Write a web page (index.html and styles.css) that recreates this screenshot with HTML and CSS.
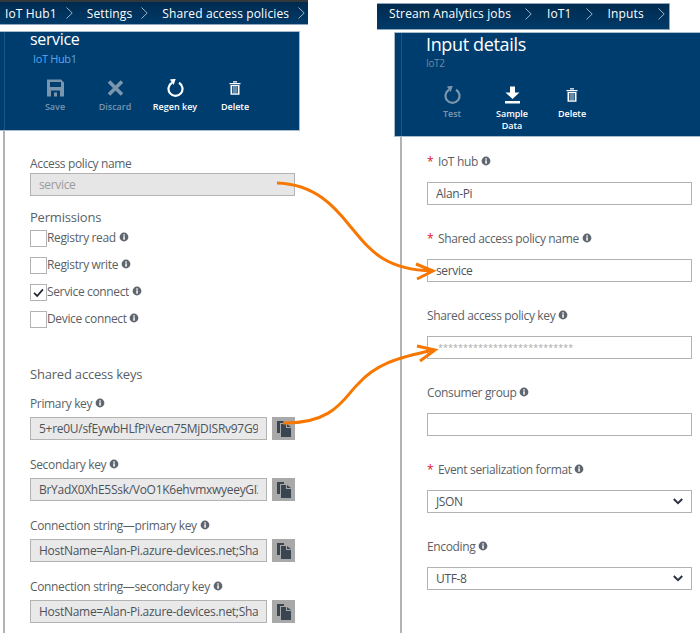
FILE: index.html
```html
<!DOCTYPE html>
<html lang="en">
<head>
  <meta charset="UTF-8">
  <meta name="viewport" content="width=device-width, initial-scale=1.0">
  <title>IoT Hub and Stream Analytics input</title>
  <link rel="stylesheet" href="styles.css">
</head>
<body>
  <svg class="defs" width="0" height="0">
    <symbol id="info" viewBox="0 0 10 10">
      <circle cx="5" cy="5" r="4.4" fill="#5f6670"/>
      <rect x="4.3" y="4.3" width="1.5" height="3.4" fill="#fff"/>
      <rect x="4.3" y="2.3" width="1.5" height="1.4" fill="#fff"/>
    </symbol>
    <symbol id="chev" viewBox="0 0 7 12">
      <path d="M0.5 0.5 L6.2 6 L0.5 11.5" fill="none" stroke="currentColor" stroke-width="1"/>
    </symbol>
    <symbol id="copy" viewBox="0 0 14 16">
      <path d="M0 0 H7 V2 H3 V12 H0 Z" fill="#3a4552"/>
      <path d="M4 3 H9 V7 H14 V16 H4 Z" fill="#3a4552"/>
      <path d="M10 3 L14 6 H10 Z" fill="#3a4552"/>
    </symbol>
    <symbol id="trash" viewBox="0 0 12 14">
      <path d="M0.5 2 H11.5 V3.2 H0.5 Z M4 0.3 H8 V1.6 H4 Z" fill="currentColor"/>
      <path d="M1.5 4 H10.5 V13.7 H1.5 Z M3.2 5 V12.6 H4.6 V5 Z M5.4 5 V12.6 H6.6 V5 Z M7.4 5 V12.6 H8.8 V5 Z" fill="currentColor" fill-rule="evenodd"/>
    </symbol>
    <symbol id="refresh" viewBox="0 0 17 18">
      <path d="M5 3.8 A7 7 0 1 0 12 3.8" fill="none" stroke="currentColor" stroke-width="2.2"/>
      <path d="M3.5 0 L9.5 0.3 L6 6 Z" fill="currentColor" transform="rotate(-12 6 3)"/>
    </symbol>
    <symbol id="drop" viewBox="0 0 10 7">
      <path d="M0.8 1 L5 5.2 L9.2 1" fill="none" stroke="#2b3440" stroke-width="2"/>
    </symbol>
  </svg>

  <section class="pane pane-left">
    <nav class="crumbs crumbs-left">
      <span>IoT Hub1</span><svg class="chev"><use href="#chev"/></svg>
      <span>Settings</span><svg class="chev"><use href="#chev"/></svg>
      <span>Shared access policies</span><svg class="chev"><use href="#chev"/></svg>
    </nav>
    <div class="blade blade-left">
      <header class="blade-head head-left">
        <h1>service</h1>
        <p class="sub sub-link">IoT Hub1</p>
        <div class="cmds">
          <div class="cmd off">
            <svg class="cmd-icon" viewBox="0 0 17 17"><path d="M0 0 H14 L17 3 V17 H0 Z M3 2.5 V7.5 H14 V2.5 Z M4 11 V17 H13 V11 Z M7 13 H10 V17 H7 Z" fill="currentColor" fill-rule="evenodd"/></svg>
            <span>Save</span>
          </div>
          <div class="cmd off">
            <svg class="cmd-icon" viewBox="0 0 17 17"><path d="M2 2 L15 15 M15 2 L2 15" stroke="currentColor" stroke-width="3.6"/></svg>
            <span>Discard</span>
          </div>
          <div class="cmd">
            <svg class="cmd-icon"><use href="#refresh"/></svg>
            <span>Regen key</span>
          </div>
          <div class="cmd">
            <svg class="cmd-icon trash"><use href="#trash"/></svg>
            <span>Delete</span>
          </div>
        </div>
      </header>

      <div class="blade-body body-left">
        <label class="lbl">Access policy name</label>
        <input class="box box-off" value="service" readonly>

        <h2 class="perm-title">Permissions</h2>
        <ul class="perms">
          <li><span class="check"></span>Registry read <svg class="i"><use href="#info"/></svg></li>
          <li><span class="check"></span>Registry write <svg class="i"><use href="#info"/></svg></li>
          <li><span class="check"><svg viewBox="0 0 17 17"><path d="M3.5 9 L7 12.5 L13.5 5" fill="none" stroke="#1f2730" stroke-width="2"/></svg></span>Service connect <svg class="i"><use href="#info"/></svg></li>
          <li><span class="check"></span>Device connect <svg class="i"><use href="#info"/></svg></li>
        </ul>

        <h2 class="keys-title">Shared access keys</h2>
        <div class="key">
          <label class="lbl">Primary key <svg class="i"><use href="#info"/></svg></label>
          <div class="key-row">
            <input class="box box-key" value="5+re0U/sfEywbHLfPiVecn75MjDISRv97G9MaRkGhT0=" readonly>
            <button class="copy"><svg><use href="#copy"/></svg></button>
          </div>
        </div>
        <div class="key">
          <label class="lbl">Secondary key <svg class="i"><use href="#info"/></svg></label>
          <div class="key-row">
            <input class="box box-key" value="BrYadX0XhE5Ssk/VoO1K6ehvmxwyeeyGIXpTq8wNcLs=" readonly>
            <button class="copy"><svg><use href="#copy"/></svg></button>
          </div>
        </div>
        <div class="key">
          <label class="lbl">Connection string—primary key <svg class="i"><use href="#info"/></svg></label>
          <div class="key-row">
            <input class="box box-key" value="HostName=Alan-Pi.azure-devices.net;SharedAccessKeyName=service" readonly>
            <button class="copy"><svg><use href="#copy"/></svg></button>
          </div>
        </div>
        <div class="key">
          <label class="lbl">Connection string—secondary key <svg class="i"><use href="#info"/></svg></label>
          <div class="key-row">
            <input class="box box-key" value="HostName=Alan-Pi.azure-devices.net;SharedAccessKeyName=service" readonly>
            <button class="copy"><svg><use href="#copy"/></svg></button>
          </div>
        </div>
      </div>
    </div>
  </section>

  <section class="pane pane-right">
    <nav class="crumbs crumbs-right">
      <span>Stream Analytics jobs</span><svg class="chev"><use href="#chev"/></svg>
      <span>IoT1</span><svg class="chev"><use href="#chev"/></svg>
      <span>Inputs</span><svg class="chev"><use href="#chev"/></svg>
    </nav>
    <div class="blade blade-right">
      <header class="blade-head head-right">
        <h1>Input details</h1>
        <p class="sub">IoT2</p>
        <div class="cmds">
          <div class="cmd off">
            <svg class="cmd-icon"><use href="#refresh"/></svg>
            <span>Test</span>
          </div>
          <div class="cmd">
            <svg class="cmd-icon" viewBox="0 0 17 17"><path d="M6 0 H11 V6 H15.5 L8.5 12.5 L1.5 6 H6 Z M1 14.5 H16 V17 H1 Z" fill="currentColor"/></svg>
            <span>Sample<br>Data</span>
          </div>
          <div class="cmd">
            <svg class="cmd-icon trash"><use href="#trash"/></svg>
            <span>Delete</span>
          </div>
        </div>
      </header>

      <div class="blade-body body-right">
        <div class="field">
          <label class="lbl"><b class="star">*</b>IoT hub <svg class="i"><use href="#info"/></svg></label>
          <input class="box" value="Alan-Pi" readonly>
        </div>
        <div class="field">
          <label class="lbl"><b class="star">*</b>Shared access policy name <svg class="i"><use href="#info"/></svg></label>
          <input class="box" value="service" readonly>
        </div>
        <div class="field">
          <label class="lbl">Shared access policy key <svg class="i"><use href="#info"/></svg></label>
          <input class="box secret" value="***************************" readonly>
        </div>
        <div class="field">
          <label class="lbl">Consumer group <svg class="i"><use href="#info"/></svg></label>
          <input class="box" readonly>
        </div>
        <div class="field">
          <label class="lbl"><b class="star">*</b>Event serialization format <svg class="i"><use href="#info"/></svg></label>
          <div class="box box-select">JSON<svg class="drop"><use href="#drop"/></svg></div>
        </div>
        <div class="field">
          <label class="lbl">Encoding <svg class="i"><use href="#info"/></svg></label>
          <div class="box box-select">UTF-8<svg class="drop"><use href="#drop"/></svg></div>
        </div>
      </div>
    </div>
  </section>

  <!-- hand drawn arrows on top of both blades -->
  <svg class="arrows" viewBox="0 0 700 633">
    <g fill="none" stroke="#f77700" stroke-width="3">
      <path d="M277 183 C315 184 335 207 350 226 C368 247 382 270 432 271"/>
      <path d="M416 264 L433 271 L417 279"/>
      <path d="M283 423 C335 424 345 396 358 384 C375 365 395 358 434 350"/>
      <path d="M417 346 L435 350 L420 361"/>
    </g>
  </svg>
</body>
</html>
```

FILE: styles.css
```css
* { box-sizing: border-box; }
html, body { margin: 0; height: 633px; overflow: hidden; }
body { position: relative; display: flex; background: #fff; font-family: "Open Sans", "Liberation Sans", sans-serif; font-size: 12px; letter-spacing: -.35px; color: #5a5f66; }
.defs { position: absolute; }
h1, h2, p, ul { margin: 0; padding: 0; font-weight: 400; }
ul { list-style: none; }

.pane-left { width: 377px; }
.pane-right { width: 323px; padding-top: 3px; }

/* breadcrumbs */
.crumbs { display: flex; align-items: center; color: #fff; white-space: nowrap; letter-spacing: .13px; background: linear-gradient(#002b50, #003a68); }
.crumbs-left { width: 308px; height: 25px; padding-left: 5px; border-top: 2px solid #33383d; border-bottom: 1px solid #8fa6bb; }
.crumbs-right { width: 293px; height: 27px; padding: 0 0 6px 12px; border-top: 1px solid #8fa6bb; border-bottom: 1px solid #8fa6bb; border-right: 1px solid #8fa6bb; }
.chev { width: 7px; height: 12px; margin: 0 14px 0 9px; color: #9db2c6; flex: none; }
.crumbs-right .chev { margin: 0 15px 0 14px; }

/* blades */
.blade { overflow: visible; }
.blade-left { margin: 6px 0 0 3px; width: 297px; height: 602px; border-left: 2px solid #b3b3b3; }
.blade-right { margin: 2px 0 0 23px; width: 300px; height: 601px; border-left: 2px solid #b3b3b3; }

.blade-head { position: relative; background: #003d6f; color: #fff; border-top: 1px solid #a9bccb; border-bottom: 1px solid #a9bccb; }
.head-left { height: 100px; margin-left: -5px; padding-left: 30px; border-right: 1px solid #a9bccb; background-image: linear-gradient(90deg, #003d6f 4px, #1d5585 4px, #1d5585 5px, #003d6f 5px); }
.head-right { height: 105px; margin-left: -8px; padding-left: 31px; border-left: 1px solid #a9bccb; background-image: linear-gradient(90deg, #003d6f 6px, #1d5585 6px, #1d5585 7px, #003d6f 7px); }
.head-left h1 { font-size: 16px; line-height: 14px; }
.head-right h1 { font-size: 18px; line-height: 22px; }
.sub { font-size: 10px; line-height: 14px; color: #6f8ba5; }
.head-left .sub { margin-top: 6px; padding-left: 3px; }
.head-right .sub { margin-top: 1px; }
.sub-link { color: #5aa5ee; font-size: 11px; }

/* command bar */
.cmds { display: flex; margin-left: -5px; }
.head-left .cmds { margin-top: 13px; }
.head-right .cmds { margin-top: 16px; margin-left: -4px; }
.cmd { width: 60px; display: flex; flex-direction: column; align-items: center; color: #fff; font-size: 9px; font-weight: 600; letter-spacing: 0; line-height: 12px; text-align: center; }
.cmd.off { color: #7a96ae; }
.cmd-icon { width: 17px; height: 18px; margin-bottom: 4px; }
.cmd-icon.trash { width: 12px; height: 14px; margin: 2px 0 6px; }

/* form bits */
.lbl { display: block; font-size: 12px; line-height: 16px; color: #5a5f66; }
.i { display: inline-block; width: 10px; height: 10px; vertical-align: 0; }
.box { display: block; width: 265px; height: 23px; padding: 0 8px; border: 1px solid #b3b3b3; background: #fff; font: 12px "Open Sans", "Liberation Sans", sans-serif; letter-spacing: -.35px; color: #4e5359; outline: none; }
.box-off { background: #e6e6e6; color: #9b9b9b; }
.box-key { width: 237px; background: #e9e9e9; letter-spacing: -.28px; }
.secret { color: #a9a9a9; padding-left: 10px; font-size: 9px; letter-spacing: .05px; }
.box-select { display: flex; align-items: center; justify-content: space-between; padding-right: 8px; }
.drop { width: 10px; height: 7px; }

.body-left { padding: 25px 0 0 25px; }
.body-left .lbl { margin-bottom: 1px; }
.perm-title { margin-top: 12px; font-size: 13px; line-height: 18px; letter-spacing: -.2px; color: #5a5f66; }
.perms { margin-top: 4px; }
.perms li { display: flex; align-items: flex-start; height: 27px; line-height: 15px; white-space: pre; }
.perms .i { margin-top: 2px; }
.check { flex: none; width: 17px; height: 17px; border: 1px solid #b3b3b3; background: #fff; }
.check svg { display: block; width: 15px; height: 15px; }
.keys-title { margin-top: 27px; font-size: 13px; line-height: 18px; letter-spacing: -.2px; color: #5a5f66; }
.key { height: 61px; }
.keys-title + .key { margin-top: 13px; }
.key .lbl { margin-bottom: 5px; }
.key-row { display: flex; gap: 5px; }
.copy { flex: none; width: 23px; height: 23px; padding: 0; border: 0; background: #a9a9a9; display: flex; align-items: center; justify-content: center; }
.copy svg { width: 14px; height: 16px; }

.body-right { padding: 17px 0 0 25px; }
.field { height: 77px; }
.field .lbl { height: 22px; margin-bottom: 6px; line-height: 16px; }
.star { display: inline-block; width: 11px; color: #e8112d; font-weight: 400; }

.arrows { position: absolute; left: 0; top: 0; width: 700px; height: 633px; pointer-events: none; }
```
